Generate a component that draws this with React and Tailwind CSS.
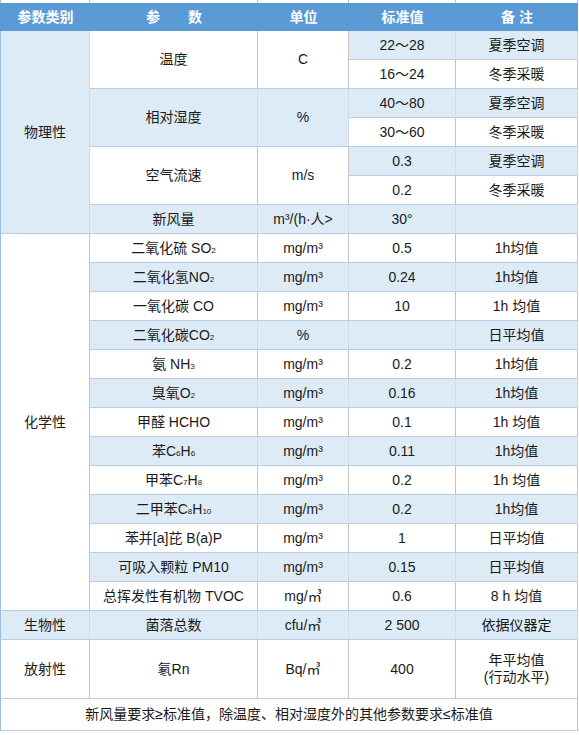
import React from "react";

const BLUE = "bg-[#ddebf7]";
const WHITE = "bg-white";

function Td({ blue, rs, cs, children, className = "" }) {
  return (
    <td
      rowSpan={rs}
      colSpan={cs}
      className={`${blue ? BLUE : WHITE} border-b border-r ${
        blue ? "border-r-[#cfdcec]" : "border-r-[#c3c3c3]"
      } border-b-[#b9cce4] text-center align-middle p-0 ${className}`}
    >
      {children}
    </td>
  );
}

const S = ({ children }) => (
  <span className="text-[8px] leading-none">{children}</span>
);

const chem = [
  [<>二氧化硫 SO<S>2</S></>, "mg/m³", "0.5", "1h均值"],
  [<>二氧化氢NO<S>2</S></>, "mg/m³", "0.24", "1h均值"],
  [<>一氧化碳 CO</>, "mg/m³", "10", "1h 均值"],
  [<>二氧化碳CO<S>2</S></>, "%", "", "日平均值"],
  [<>氨 NH<S>3</S></>, "mg/m³", "0.2", "1h均值"],
  [<>臭氧O<S>2</S></>, "mg/m³", "0.16", "1h均值"],
  [<>甲醛 HCHO</>, "mg/m³", "0.1", "1h 均值"],
  [<>苯C<S>6</S>H<S>6</S></>, "mg/m³", "0.11", "1h均值"],
  [<>甲苯C<S>7</S>H<S>8</S></>, "mg/m³", "0.2", "1h 均值"],
  [<>二甲苯C<S>8</S>H<S>10</S></>, "mg/m³", "0.2", "1h均值"],
  [<>苯并[a]芘 B(a)P</>, "mg/m³", "1", "日平均值"],
  [<>可吸入颗粒 PM10</>, "mg/m³", "0.15", "日平均值"],
  [<>总挥发性有机物 TVOC</>, "mg/㎥", "0.6", "8 h 均值"],
];

export default function App() {
  return (
    <div className="w-[579px] h-[735px] bg-white font-['Liberation_Sans','Noto_Sans_CJK_SC',sans-serif] text-[14px] text-[#1a1a1a] leading-[17px]">
      <table className="table-fixed border-separate border-spacing-0 w-[578px]">
        <colgroup>
          <col className="w-[90px]" />
          <col className="w-[168px]" />
          <col className="w-[91px]" />
          <col className="w-[107px]" />
          <col className="w-[122px]" />
        </colgroup>
        <tbody>
          <tr className="h-[3px]">
            <td className="h-[3px] p-0 border-l border-l-[#9dbde0] border-r border-r-[#c3c3c3]"></td>
            <td className="h-[3px] p-0 border-r border-r-[#c3c3c3]"></td>
            <td className="h-[3px] p-0 border-r border-r-[#c3c3c3]"></td>
            <td className="h-[3px] p-0 border-r border-r-[#c3c3c3]"></td>
            <td className="h-[3px] p-0 border-r border-r-[#c3c3c3]"></td>
          </tr>
          <tr className="h-[28px] bg-[#5b9bd5] text-white font-bold">
            <td className="h-[28px] p-0 text-center border-l border-l-[#5b9bd5]">参数类别</td>
            <td className="h-[28px] p-0 text-center">参　　数</td>
            <td className="h-[28px] p-0 text-center">单位</td>
            <td className="h-[28px] p-0 text-center">标准值</td>
            <td className="h-[28px] p-0 text-center">备 注</td>
          </tr>
          <tr className="h-[29px]">
            <Td blue rs={7} className="border-l border-l-[#9dbde0]">物理性</Td>
            <Td rs={2}>温度</Td>
            <Td rs={2}>C</Td>
            <Td blue className="h-[29px]">22～28</Td>
            <Td blue>夏季空调</Td>
          </tr>
          <tr className="h-[29px]">
            <Td className="h-[29px]">16～24</Td>
            <Td>冬季采暖</Td>
          </tr>
          <tr className="h-[29px]">
            <Td blue rs={2}>相对湿度</Td>
            <Td blue rs={2}>%</Td>
            <Td blue className="h-[29px]">40～80</Td>
            <Td blue>夏季空调</Td>
          </tr>
          <tr className="h-[29px]">
            <Td className="h-[29px]">30～60</Td>
            <Td>冬季采暖</Td>
          </tr>
          <tr className="h-[29px]">
            <Td rs={2}>空气流速</Td>
            <Td rs={2}>m/s</Td>
            <Td blue className="h-[29px]">0.3</Td>
            <Td blue>夏季空调</Td>
          </tr>
          <tr className="h-[29px]">
            <Td className="h-[29px]">0.2</Td>
            <Td>冬季采暖</Td>
          </tr>
          <tr className="h-[29px]">
            <Td blue className="h-[29px]">新风量</Td>
            <Td blue>m³/(h·人&gt;</Td>
            <Td blue>30°</Td>
            <Td blue></Td>
          </tr>
          {chem.map((r, i) => (
            <tr key={i} className="h-[29px]">
              {i === 0 && (
                <Td rs={13} className="border-l border-l-[#9dbde0]">化学性</Td>
              )}
              <Td blue={i % 2 === 1} className="h-[29px]">{r[0]}</Td>
              <Td blue={i % 2 === 1}>{r[1]}</Td>
              <Td blue={i % 2 === 1}>{r[2]}</Td>
              <Td blue={i % 2 === 1}>{r[3]}</Td>
            </tr>
          ))}
          <tr className="h-[29px]">
            <Td blue className="h-[29px] border-l border-l-[#9dbde0]">生物性</Td>
            <Td blue>菌落总数</Td>
            <Td blue>cfu/㎥</Td>
            <Td blue>2 500</Td>
            <Td blue>依据仪器定</Td>
          </tr>
          <tr className="h-[59px]">
            <Td className="h-[59px] border-l border-l-[#9dbde0]">放射性</Td>
            <Td>氡Rn</Td>
            <Td>Bq/㎥</Td>
            <Td>400</Td>
            <Td>
              <div>年平均值</div>
              <div>(行动水平)</div>
            </Td>
          </tr>
          <tr className="h-[32px]">
            <Td cs={5} className="h-[32px] border-l border-l-[#9dbde0]">
              新风量要求≥标准值，除温度、相对湿度外的其他参数要求≤标准值
            </Td>
          </tr>
        </tbody>
      </table>
    </div>
  );
}
